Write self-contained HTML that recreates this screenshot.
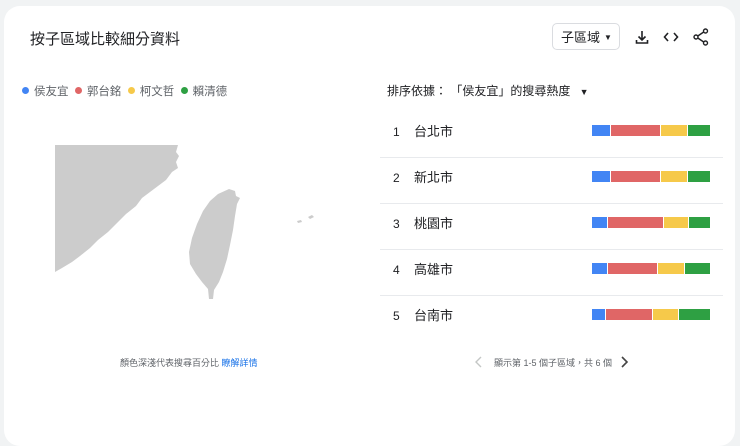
<!DOCTYPE html>
<html><head><meta charset="utf-8"><style>
body{margin:0;width:740px;height:437px;background:#f1f3f4;font-family:"Liberation Sans","Noto Sans CJK TC",sans-serif;position:relative;overflow:hidden}
.card{position:absolute;left:4px;top:6px;width:731px;height:440px;background:#fff;border-radius:16px}
.a{position:absolute;white-space:nowrap}
.dot{display:inline-block;width:7px;height:7px;border-radius:50%;margin-right:5px;vertical-align:1px}
.row{position:absolute;left:380px;width:343px;height:46px;border-bottom:1px solid #e8eaed}
.row .n{position:absolute;left:13px;top:-2px;font-size:12px;color:#202124;line-height:46px}
.row .c{position:absolute;left:34px;top:-2px;font-size:13px;color:#202124;line-height:46px}
.bar{position:absolute;top:14px;height:11px;display:flex;gap:1px}
.bar span{height:11px}
</style></head><body>
<div class="card"></div>
<div class="a" style="left:30px;top:28px;font-size:15px;color:#202124">按子區域比較細分資料</div>
<div class="a" style="left:552px;top:23px;width:68px;height:27px;border:1px solid #dadce0;border-radius:5px;font-size:13px;color:#202124;line-height:27px;padding-left:8px;box-sizing:border-box">子區域<span style="position:absolute;left:51px;top:0;font-size:8px">▼</span></div>
<svg class="a" style="left:634px;top:29px" width="16" height="16" viewBox="0 0 16 16" fill="none" stroke="#202124" stroke-width="1.6"><path d="M8 2v9M4.5 7.5 8 11l3.5-3.5M2.5 11v3h11v-3"/></svg>
<svg class="a" style="left:663px;top:30px" width="16" height="14" viewBox="0 0 16 14" fill="none" stroke="#202124" stroke-width="1.6"><path d="M5 3 1.5 7 5 11M11 3l3.5 4L11 11"/></svg>
<svg class="a" style="left:693px;top:28px" width="16" height="18" viewBox="0 0 16 18" fill="none" stroke="#202124" stroke-width="1.4"><circle cx="12.5" cy="3" r="2"/><circle cx="3" cy="9" r="2"/><circle cx="12.5" cy="15" r="2"/><path d="M4.8 8 10.7 4M4.8 10l5.9 4"/></svg>
<div class="a" style="left:22px;top:83px;font-size:11.5px;color:#5f6368"><span class="dot" style="background:#4285f4"></span>侯友宜 &nbsp;<span class="dot" style="background:#e06666"></span>郭台銘 &nbsp;<span class="dot" style="background:#f6c94a"></span>柯文哲 &nbsp;<span class="dot" style="background:#2ea043"></span>賴清德</div>
<div class="a" style="left:387px;top:82px;font-size:12px;color:#202124">排序依據： 「侯友宜」的搜尋熱度 <span style="font-size:9px;margin-left:6px">▼</span></div>
<svg class="a" style="left:0;top:0" width="340" height="320">
<path fill="#cccccc" d="M55 145L178 145L176 152L179 156L176 162L178 168L172 172L166 180L158 186L150 192L142 198L136 206L126 214L118 222L108 232L98 240L90 248L80 256L72 262L62 268L55 272Z"/>
<path fill="#cccccc" d="M229 189L235 191L236 196L240 198L237 204L235 216L233 230L230 245L227 259L223 272L219 282L214 290L213 299L209 299L208 289L202 282L196 274L190 264L189 252L192 238L197 224L203 211L210 201L218 194Z"/>
<path fill="#cccccc" d="M297 221l4-1 1 2-4 1zM308 217l4-2 2 2-4 2z"/>
</svg>
<div class="row" style="top:111px"><span class="n">1</span><span class="c">台北市</span><div class="bar" style="left:212px"><span style="width:18px;background:#4285f4"></span><span style="width:49px;background:#e06666"></span><span style="width:26px;background:#f6c94a"></span><span style="width:22px;background:#2ea043"></span></div></div>
<div class="row" style="top:157px"><span class="n">2</span><span class="c">新北市</span><div class="bar" style="left:212px"><span style="width:18px;background:#4285f4"></span><span style="width:49px;background:#e06666"></span><span style="width:26px;background:#f6c94a"></span><span style="width:22px;background:#2ea043"></span></div></div>
<div class="row" style="top:203px"><span class="n">3</span><span class="c">桃園市</span><div class="bar" style="left:212px"><span style="width:15px;background:#4285f4"></span><span style="width:55px;background:#e06666"></span><span style="width:24px;background:#f6c94a"></span><span style="width:21px;background:#2ea043"></span></div></div>
<div class="row" style="top:249px"><span class="n">4</span><span class="c">高雄市</span><div class="bar" style="left:212px"><span style="width:15px;background:#4285f4"></span><span style="width:49px;background:#e06666"></span><span style="width:26px;background:#f6c94a"></span><span style="width:25px;background:#2ea043"></span></div></div>
<div class="row" style="top:295px;border-bottom:none"><span class="n">5</span><span class="c">台南市</span><div class="bar" style="left:212px"><span style="width:13px;background:#4285f4"></span><span style="width:46px;background:#e06666"></span><span style="width:25px;background:#f6c94a"></span><span style="width:31px;background:#2ea043"></span></div></div>
<div class="a" style="left:120px;top:356px;font-size:9px;color:#5f6368">顏色深淺代表搜尋百分比 <span style="color:#1a73e8">瞭解詳情</span></div>
<svg class="a" style="left:474px;top:356px" width="10" height="12" viewBox="0 0 10 12" fill="none" stroke="#c4c7c5" stroke-width="1.4"><path d="M7 1 2 6l5 5"/></svg>
<div class="a" style="left:494px;top:356px;font-size:9px;color:#5f6368">顯示第 1-5 個子區域，共 6 個</div>
<svg class="a" style="left:619px;top:356px" width="10" height="12" viewBox="0 0 10 12" fill="none" stroke="#444" stroke-width="1.6"><path d="M3 1l5 5-5 5"/></svg>
</body></html>
